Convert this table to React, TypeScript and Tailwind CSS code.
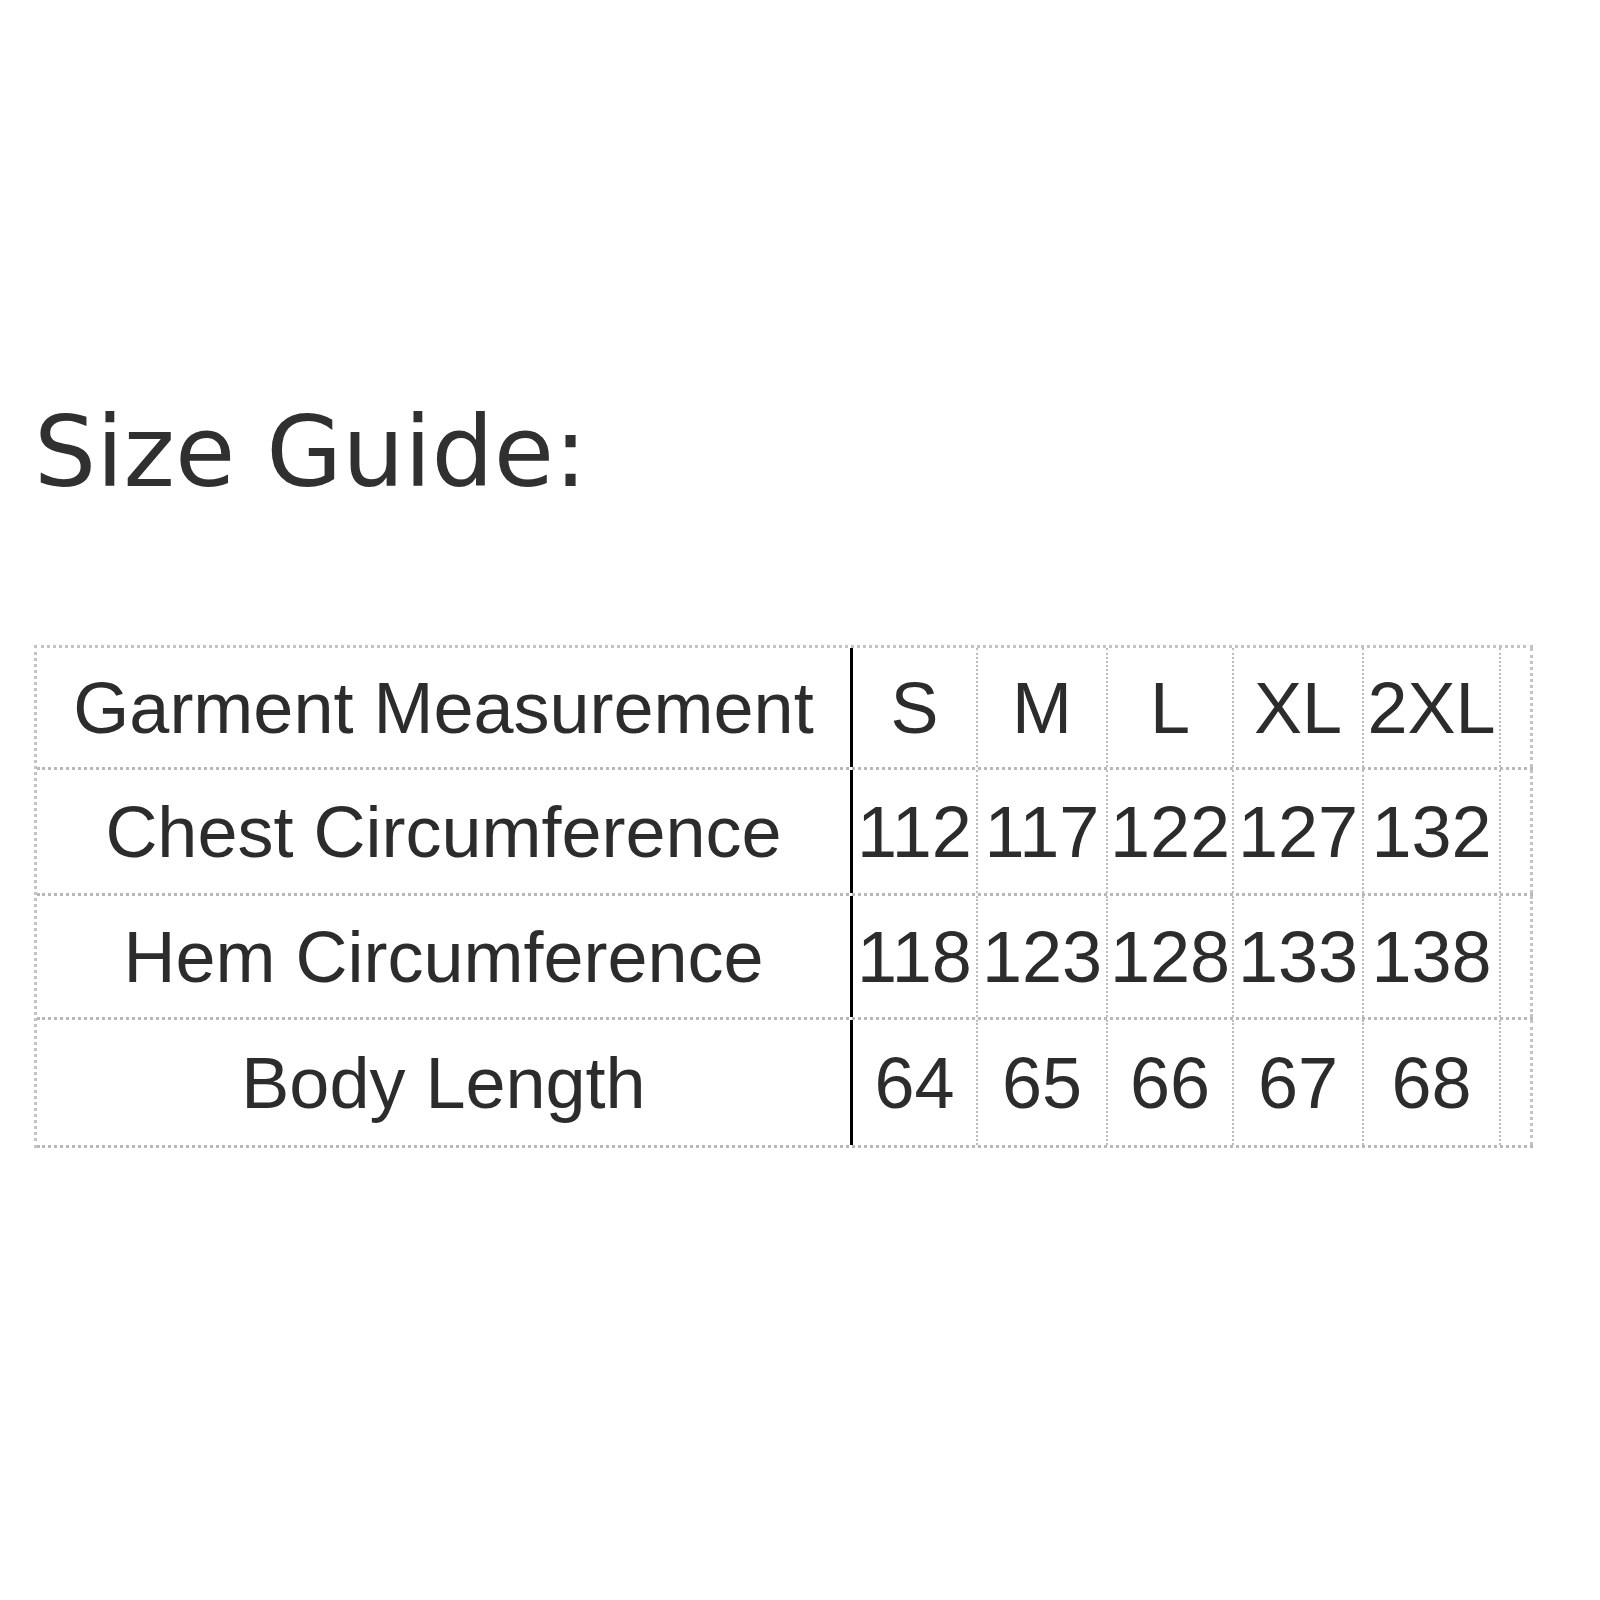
const sizes = ["S", "M", "L", "XL", "2XL"];

const rows = [
  { label: "Chest Circumference", values: ["112", "117", "122", "127", "132"], h: "h-[126px]" },
  { label: "Hem Circumference", values: ["118", "123", "128", "133", "138"], h: "h-[124px]" },
  { label: "Body Length", values: ["64", "65", "66", "67", "68"], h: "h-[128px]" },
];

const colWidths = ["w-[125px]", "w-[130px]", "w-[126px]", "w-[130px]", "w-[137px]"];

const Row = ({ label, values, h }: { label: string; values: string[]; h: string }) => (
  <div className={`flex ${h} border-b-[3px] border-dotted border-[#b8b8b8]`}>
    <div className="flex w-[816px] items-center justify-center border-r-[3px] border-r-black [border-right-style:solid]">
      {label}
    </div>
    {values.map((v, i) => (
      <div
        key={i}
        className={`flex ${colWidths[i]} items-center justify-center border-r-2 border-dotted border-[#bcbcbc]`}
      >
        {v}
      </div>
    ))}
    <div className="w-[32px] border-r-[3px] border-dotted border-[#c4c4c4]" />
  </div>
);

export default function App() {
  return (
    <div className="min-h-[1600px] bg-white pl-[34px] pt-[403px] text-[#303030]">
      <h1 className="font-['DejaVu_Sans',sans-serif] text-[98px] leading-none font-normal">Size Guide:</h1>

      <div className="mt-[144px] w-[1499px] border-t-[3px] border-l-[3px] border-dotted border-[#c4c4c4] font-['Liberation_Sans',Arial,sans-serif] text-[72px] leading-none text-[#2c2c2c]">
        <Row label="Garment Measurement" values={sizes} h="h-[122px]" />
        {rows.map((r) => (
          <Row key={r.label} label={r.label} values={r.values} h={r.h} />
        ))}
      </div>
    </div>
  );
}
